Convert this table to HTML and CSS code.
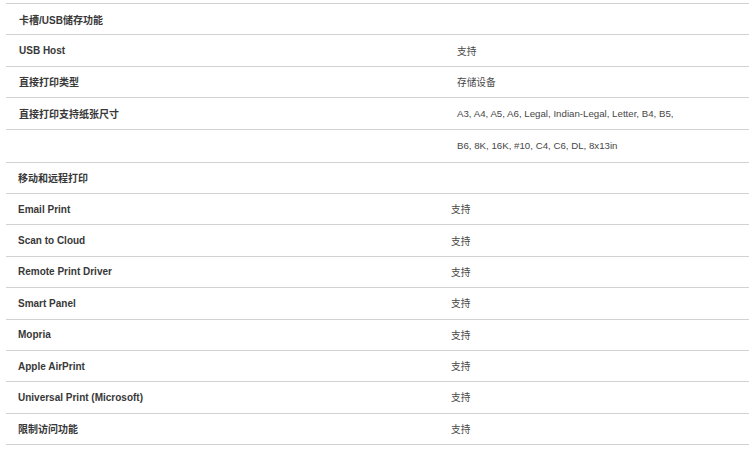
FILE: index.html
```html
<!DOCTYPE html>
<html lang="zh-CN">
<head>
<meta charset="utf-8">
<title>规格</title>
<link rel="stylesheet" href="styles.css">
</head>
<body>
<div class="spec">
  <section class="group group-a">
    <div class="row"><div class="label">卡槽/USB储存功能</div><div class="value"></div></div>
    <div class="row"><div class="label">USB Host</div><div class="value">支持</div></div>
    <div class="row"><div class="label">直接打印类型</div><div class="value">存储设备</div></div>
    <div class="row"><div class="label">直接打印支持纸张尺寸</div><div class="value">A3, A4, A5, A6, Legal, Indian-Legal, Letter, B4, B5,</div></div>
    <div class="row tall"><div class="label"></div><div class="value">B6, 8K, 16K, #10, C4, C6, DL, 8x13in</div></div>
  </section>
  <section class="group group-b">
    <div class="row"><div class="label">移动和远程打印</div><div class="value"></div></div>
    <div class="row"><div class="label">Email Print</div><div class="value">支持</div></div>
    <div class="row"><div class="label">Scan to Cloud</div><div class="value">支持</div></div>
    <div class="row"><div class="label">Remote Print Driver</div><div class="value">支持</div></div>
    <div class="row"><div class="label">Smart Panel</div><div class="value">支持</div></div>
    <div class="row"><div class="label">Mopria</div><div class="value">支持</div></div>
    <div class="row"><div class="label">Apple AirPrint</div><div class="value">支持</div></div>
    <div class="row"><div class="label">Universal Print (Microsoft)</div><div class="value">支持</div></div>
    <div class="row"><div class="label">限制访问功能</div><div class="value">支持</div></div>
  </section>
</div>
</body>
</html>
```

FILE: styles.css
```css
html, body {
  margin: 0;
  padding: 0;
  background: #ffffff;
}
body {
  font-family: "Liberation Sans", Arial, "Noto Sans CJK SC", sans-serif;
  color: #333333;
}
.spec {
  padding-top: 3px;
  padding-left: 6px;
}
.group-a {
  border-top: 1px solid #d2d2d2;
}
.row {
  display: grid;
  grid-template-columns: 445px 1fr;
  align-items: center;
  height: 31.4px;
  box-sizing: border-box;
  border-bottom: 1px solid #d2d2d2;
}
.row.tall {
  height: 33px;
}
.label {
  font-size: 10px;
  font-weight: bold;
  color: #383838;
  padding-left: 13px;
}
.value {
  font-size: 9.7px;
  color: #474747;
  padding-left: 6px;
}
.group-b .row {
  grid-template-columns: 439px 1fr;
}
.group-b .label {
  padding-left: 12px;
}
```
